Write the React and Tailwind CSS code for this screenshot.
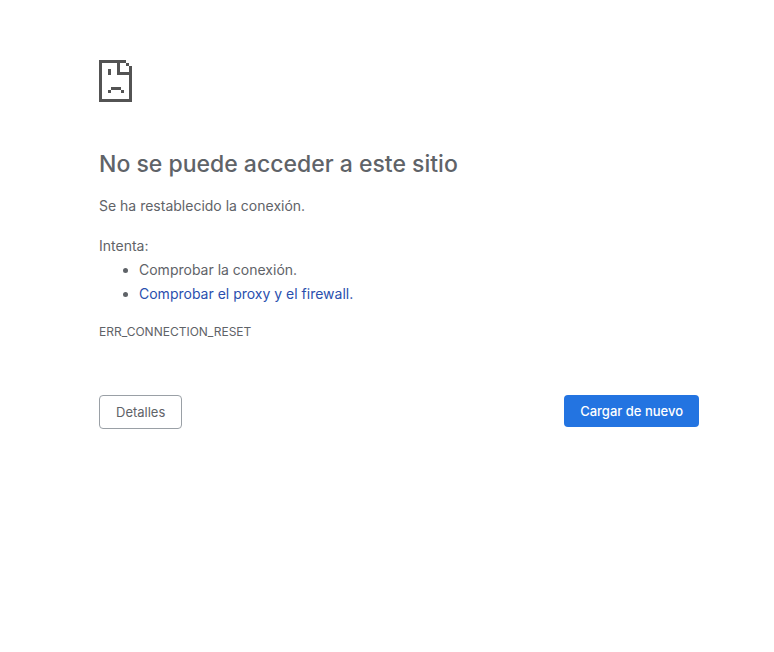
const SadPageIcon = () => (
  <svg
    width="33"
    height="42"
    viewBox="0 0 33 42"
    fill="currentColor"
    shapeRendering="crispEdges"
    className="text-[#535353]"
    aria-hidden="true"
  >
    <path d="M0 0h27v3h-6v9h9V6h3v36H0zM3 3v36h27V15H18V3z" fillRule="evenodd" />
    <path d="M27 3h3v3h-3zM9 9h3v6H9zM12 27h10v3H12zM9 30h3v3H9zM22 30h3v3h-3z" />
  </svg>
);

const App = () => {
  const handleReload = () => {
    window.location.reload();
  };

  return (
    <main className="max-w-[774px] mx-auto pl-[99px] pr-[75px] pt-[60px] font-[Inter,sans-serif] text-sm leading-6 text-[#5f6368]">
      <SadPageIcon />

      <h1 className="mt-11 text-[23px] leading-9 font-medium">
        No se puede acceder a este sitio
      </h1>
      <p className="mt-3">Se ha restablecido la conexión.</p>

      <div className="mt-4">
        <p>Intenta:</p>
        <ul className="list-disc pl-10">
          <li>Comprobar la conexión.</li>
          <li>
            <a href="#proxy" className="text-[#2a4fae]">
              Comprobar el proxy y el firewall.
            </a>
          </li>
        </ul>
      </div>

      <p className="mt-4 text-xs leading-5">ERR_CONNECTION_RESET</p>

      <div className="mt-[53px] flex items-start justify-between">
        <button
          type="button"
          className="rounded border border-[#9aa0a6] px-4 py-1.5 text-[13px] leading-5"
        >
          Detalles
        </button>
        <button
          type="button"
          onClick={handleReload}
          className="rounded bg-[#2374e1] px-4 py-1.5 text-[13px] leading-5 font-medium text-white"
        >
          Cargar de nuevo
        </button>
      </div>
    </main>
  );
};

export default App;
